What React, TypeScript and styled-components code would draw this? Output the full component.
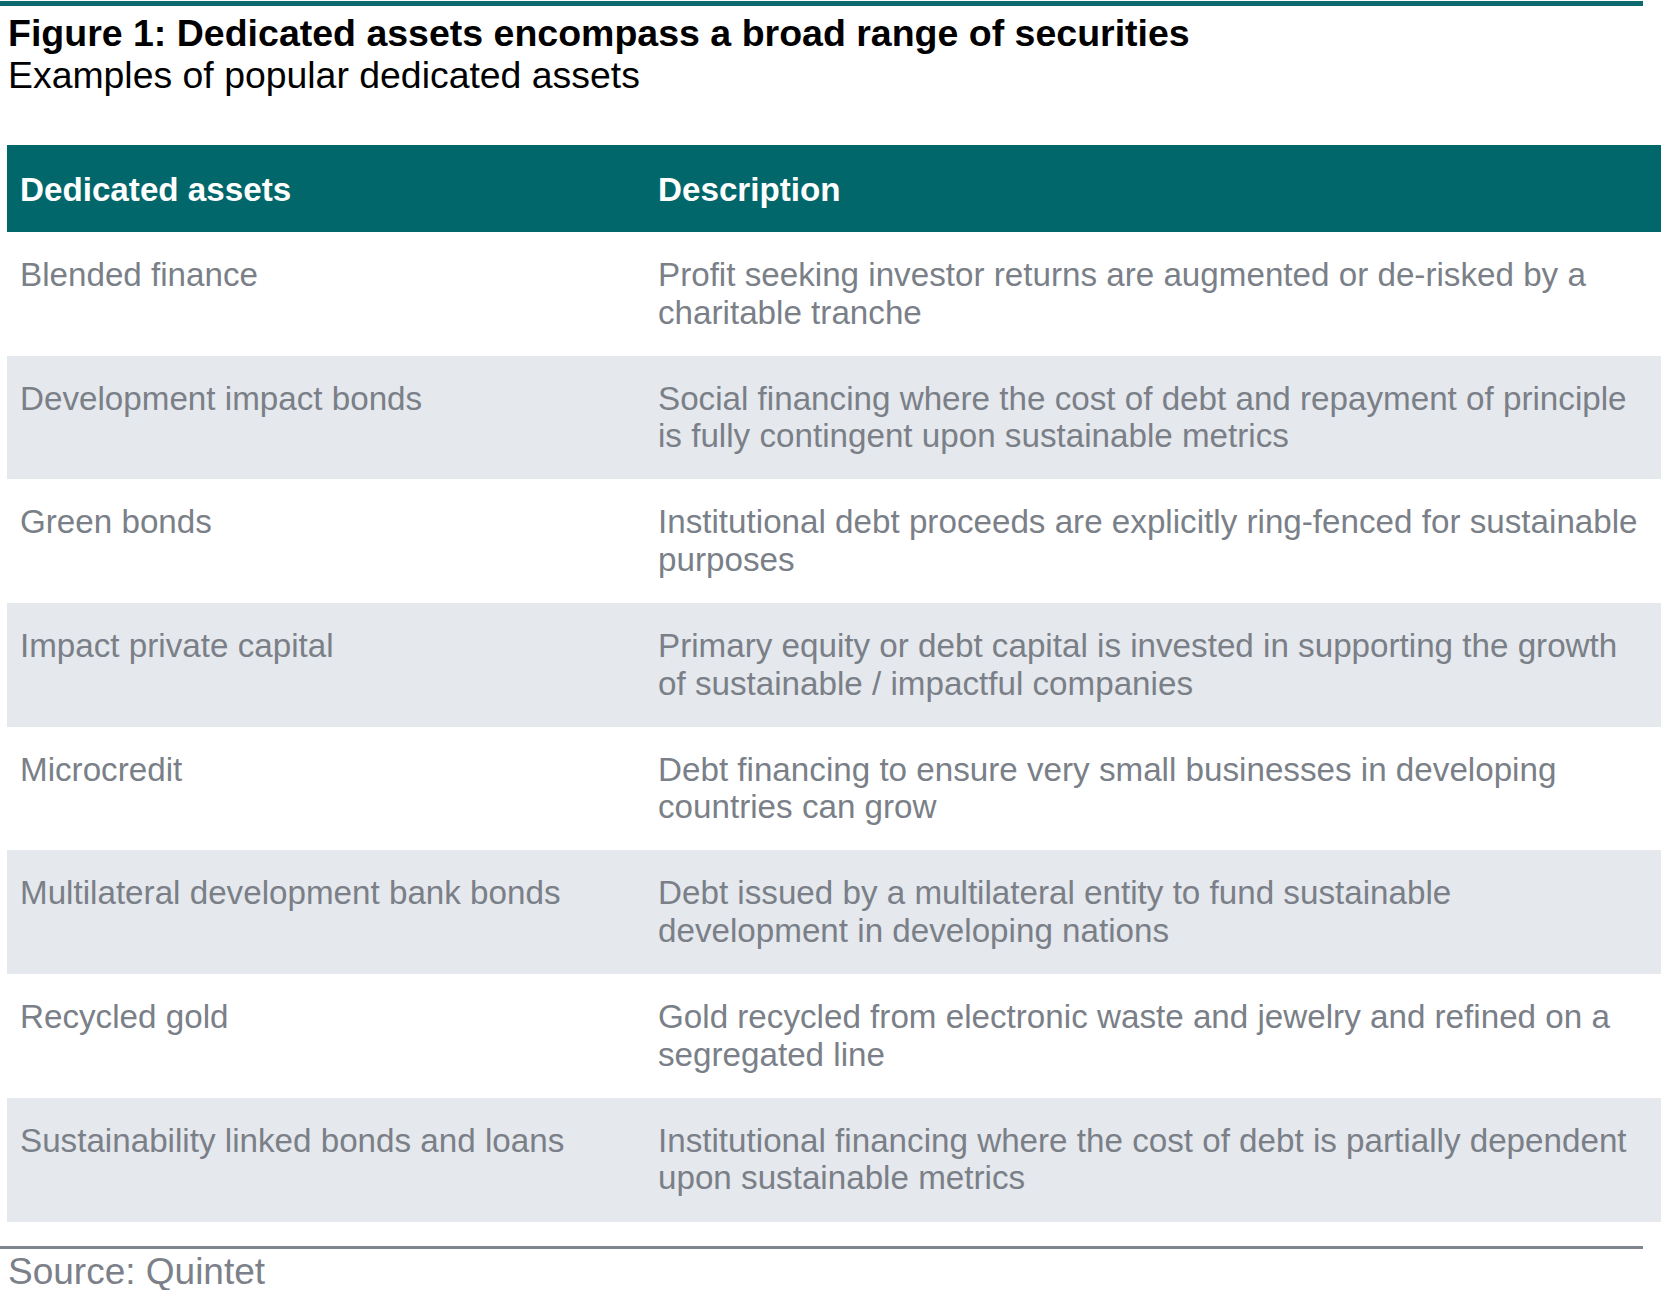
import React from "react";
import styled, { createGlobalStyle } from "styled-components";

const GlobalStyle = createGlobalStyle`
  html, body {
    margin: 0;
    padding: 0;
    background: #ffffff;
  }
  body {
    font-family: "Liberation Sans", Arial, Helvetica, sans-serif;
  }
`;

const Page = styled.div`
  width: 1661px;
  padding-top: 1px;
`;

const TopRule = styled.div`
  width: 1643px;
  height: 5px;
  background: #0e6a6e;
`;

const Title = styled.h1`
  margin: 6px 0 0 8px;
  font-size: 37.5px;
  line-height: 42px;
  font-weight: 700;
  color: #000000;
  white-space: nowrap;
`;

const Subtitle = styled.p`
  margin: 0 0 0 8px;
  font-size: 37.4px;
  line-height: 42px;
  font-weight: 400;
  color: #000000;
  white-space: nowrap;
`;

const Table = styled.div`
  margin: 49px 0 0 7px;
  width: 1654px;
  display: flex;
  flex-direction: column;
`;

const HeaderRow = styled.div`
  display: grid;
  grid-template-columns: 638px 1fr;
  height: 87px;
  align-items: center;
  background: #02676a;
  color: #ffffff;
  font-size: 33.2px;
  font-weight: 700;
  line-height: 38px;
  padding-top: 3px;
  box-sizing: border-box;
`;

const Row = styled.div<{ $shaded: boolean }>`
  display: grid;
  grid-template-columns: 638px 1fr;
  height: 123.7px;
  box-sizing: border-box;
  padding-top: 24px;
  background: ${(p) => (p.$shaded ? "#e5e8ec" : "#ffffff")};
  color: #7a7f88;
  font-size: 33.2px;
  line-height: 37.5px;
`;

const Cell = styled.div`
  padding-left: 13px;
  white-space: nowrap;
`;

const Line = styled.span`
  display: block;
`;

const BottomRule = styled.div`
  margin-top: 24px;
  width: 1643px;
  height: 3px;
  background: #80868e;
`;

const Source = styled.p`
  margin: 5px 0 0 8px;
  font-size: 37px;
  line-height: 36px;
  color: #7b8089;
  white-space: nowrap;
`;

const rows: { asset: string; desc: string[] }[] = [
  {
    asset: "Blended finance",
    desc: [
      "Profit seeking investor returns are augmented or de-risked by a",
      "charitable tranche",
    ],
  },
  {
    asset: "Development impact bonds",
    desc: [
      "Social financing where the cost of debt and repayment of principle",
      "is fully contingent upon sustainable metrics",
    ],
  },
  {
    asset: "Green bonds",
    desc: [
      "Institutional debt proceeds are explicitly ring-fenced for sustainable",
      "purposes",
    ],
  },
  {
    asset: "Impact private capital",
    desc: [
      "Primary equity or debt capital is invested in supporting the growth",
      "of sustainable / impactful companies",
    ],
  },
  {
    asset: "Microcredit",
    desc: [
      "Debt financing to ensure very small businesses in developing",
      "countries can grow",
    ],
  },
  {
    asset: "Multilateral development bank bonds",
    desc: [
      "Debt issued by a multilateral entity to fund sustainable",
      "development in developing nations",
    ],
  },
  {
    asset: "Recycled gold",
    desc: [
      "Gold recycled from electronic waste and jewelry and refined on a",
      "segregated line",
    ],
  },
  {
    asset: "Sustainability linked bonds and loans",
    desc: [
      "Institutional financing where the cost of debt is partially dependent",
      "upon sustainable metrics",
    ],
  },
];

export default function App() {
  return (
    <>
      <GlobalStyle />
      <Page>
        <TopRule />
        <Title>Figure 1: Dedicated assets encompass a broad range of securities</Title>
        <Subtitle>Examples of popular dedicated assets</Subtitle>
        <Table>
          <HeaderRow>
            <Cell>Dedicated assets</Cell>
            <Cell>Description</Cell>
          </HeaderRow>
          {rows.map((r, i) => (
            <Row key={r.asset} $shaded={i % 2 === 1}>
              <Cell>{r.asset}</Cell>
              <Cell>
                {r.desc.map((l) => (
                  <Line key={l}>{l}</Line>
                ))}
              </Cell>
            </Row>
          ))}
        </Table>
        <BottomRule />
        <Source>Source: Quintet</Source>
      </Page>
    </>
  );
}
